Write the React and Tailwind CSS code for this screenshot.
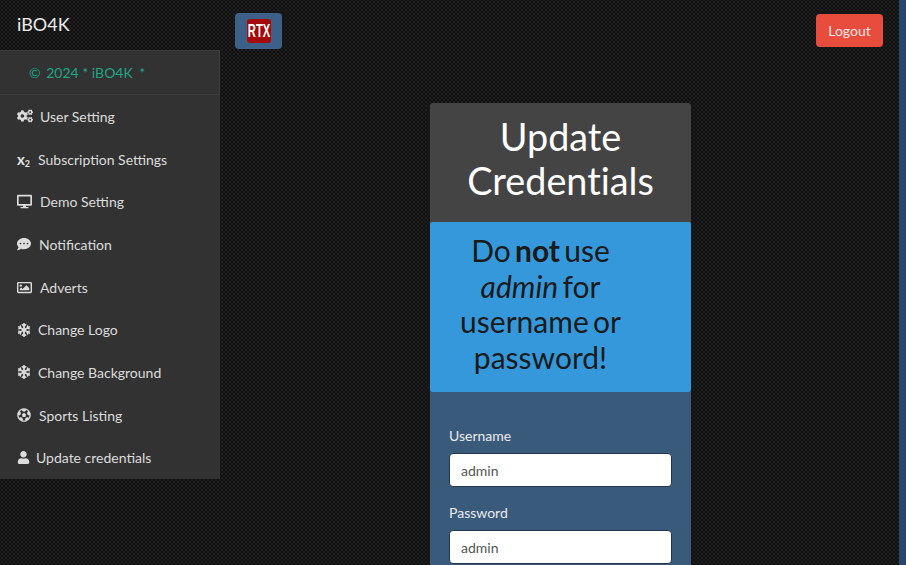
import { FaCogs, FaDesktop, FaCommentDots, FaRegImage, FaSnowflake, FaFutbol, FaUser } from "react-icons/fa";

const SubscriptIcon = () => (
  <span className="font-bold text-[15px] leading-none text-[#e6e6e6]">
    x<span className="text-[9px] relative top-[2px]">2</span>
  </span>
);

const menu = [
  { label: "User Setting", icon: <FaCogs className="text-[16px]" />, gap: "gap-[7px]" },
  { label: "Subscription Settings", icon: <SubscriptIcon />, gap: "gap-[8px]" },
  { label: "Demo Setting", icon: <FaDesktop className="text-[15px]" />, gap: "gap-[8px]" },
  { label: "Notification", icon: <FaCommentDots className="text-[14px]" />, gap: "gap-[8px]" },
  { label: "Adverts", icon: <FaRegImage className="text-[15px]" />, gap: "gap-[8px]" },
  { label: "Change Logo", icon: <FaSnowflake className="text-[14px]" />, gap: "gap-[7px]" },
  { label: "Change Background", icon: <FaSnowflake className="text-[14px]" />, gap: "gap-[7px]" },
  { label: "Sports Listing", icon: <FaFutbol className="text-[14px]" />, gap: "gap-[8px]" },
  { label: "Update credentials", icon: <FaUser className="text-[13px]" />, gap: "gap-[6px]" },
];

const Sidebar = () => (
  <aside className="w-[220px] shrink-0 mt-[3px] self-start bg-[#323232] text-[14px] text-[#dcdcdc]">
    <div className="h-[45px] pl-[29px] flex items-center whitespace-pre border border-[#3d3d3d] border-l-0 text-[#20a585] text-[14px]">
      <span className="mr-[2px]">©</span> 2024 * iBO4K <span className="ml-[3px]">*</span>
    </div>
    {menu.map((item) => (
      <div key={item.label} className={`h-[42.7px] pl-[17px] flex items-center ${item.gap}`}>
        {item.icon}
        <span>{item.label}</span>
      </div>
    ))}
  </aside>
);

const Field = ({ label, value }) => (
  <div className="mb-[16px]">
    <label className="block mb-[7px] text-[14px] leading-[20px] text-[#ebebeb]">{label}</label>
    <input
      readOnly
      value={value}
      className="w-full h-[34px] px-[11px] bg-white rounded-[4px] border border-[#24364a] text-[14px] text-[#555555] outline-none"
    />
  </div>
);

const App = () => (
  <div className="h-[565px] w-[906px] overflow-hidden flex bg-[#26476b] font-['Lato','Open_Sans',sans-serif]">
    <div className="w-[899px] bg-[#111111] bg-[radial-gradient(#1f1f1f_1px,transparent_1.2px),radial-gradient(#1a1a1a_1px,transparent_1.2px)] bg-[length:4px_4px] bg-[position:0_0,2px_2px] flex flex-col">
      <header className="h-[47px] flex shrink-0">
        <div className="w-[235px] pl-[17px] pt-[12px] text-[18px] leading-[25px] text-[#ebebeb]">iBO4K</div>
        <div className="mt-[13px] w-[47px] h-[36px] rounded-[4px] bg-[#3c6088] flex items-center justify-center">
          <div className="w-[24px] h-[24px] rounded-[3px] bg-[#a50a0a] flex items-center justify-center">
            <span className="font-['Liberation_Sans',sans-serif] font-bold text-[18px] text-white scale-x-[0.62]">RTX</span>
          </div>
        </div>
        <button className="ml-auto mr-[16px] mt-[14px] h-[33px] w-[67px] rounded-[4px] bg-[#e74c3c] text-[14px] text-[#f0e6e4]">
          Logout
        </button>
      </header>
      <div className="flex flex-1 min-h-0">
        <Sidebar />
        <main className="flex-1 flex justify-center min-w-0">
          <div className="mt-[56px] ml-[2px] w-[261px] self-start rounded-[4px] bg-[#3a5a7c]">
            <div className="h-[119px] pt-[12px] px-[15px] bg-[#444444] rounded-t-[4px] text-center text-[37.8px] leading-[44px] text-white [font-variant-ligatures:none]">
              Update Credentials
            </div>
            <div className="h-[170px] rounded-[3px] bg-[#3498db] pt-[11px] pl-[20px] pr-[60px] text-center text-[30px] leading-[35.5px] text-[#1a1a1a] [word-spacing:-3.5px]">
              Do <b>not</b> use <i>admin</i> for username or password!
            </div>
            <div className="pt-[34px] px-[19px] h-[300px]">
              <Field label="Username" value="admin" />
              <Field label="Password" value="admin" />
            </div>
          </div>
        </main>
      </div>
    </div>
  </div>
);

export default App;
